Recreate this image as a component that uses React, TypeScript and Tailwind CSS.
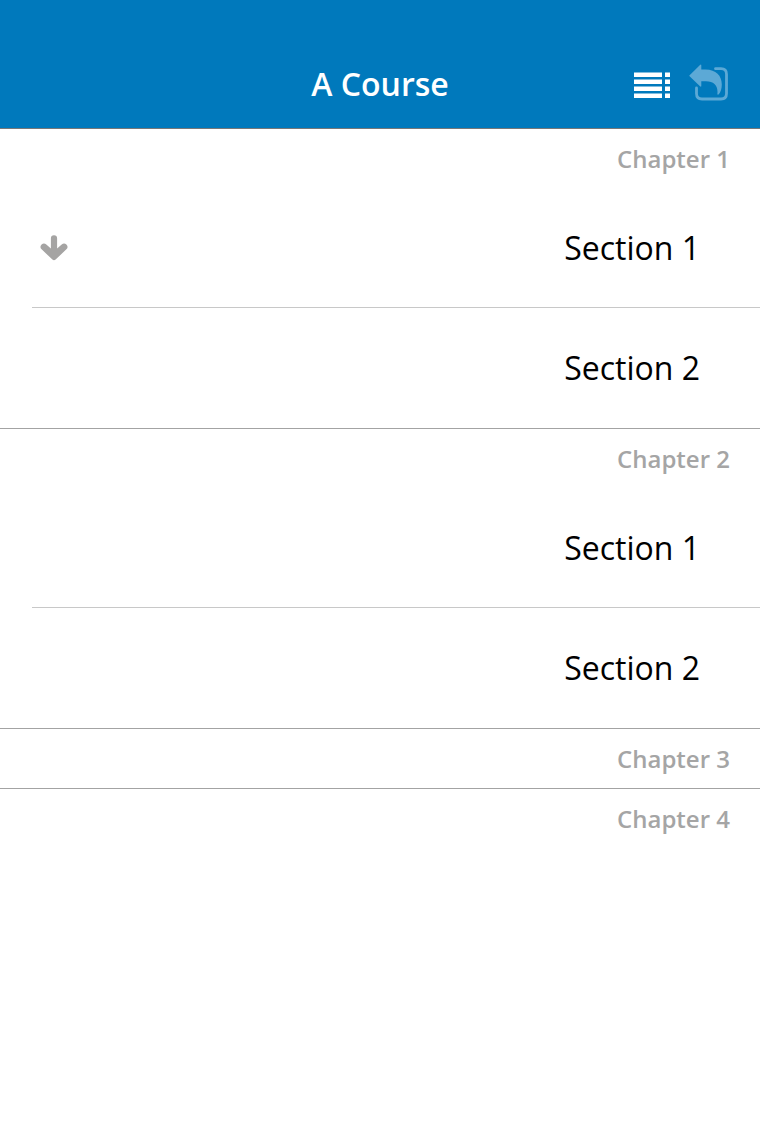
const chapters = [
  { title: "Chapter 1", sections: ["Section 1", "Section 2"], downloadable: "Section 1" },
  { title: "Chapter 2", sections: ["Section 1", "Section 2"] },
  { title: "Chapter 3", sections: [] },
  { title: "Chapter 4", sections: [] },
];

function ListIcon() {
  return (
    <svg viewBox="0 0 36 26" className="h-[26px] w-9" fill="currentColor" aria-hidden="true">
      <path d="M0 .5h28v4.400H0zM31 .5h5v4.400h-5zM0 7.500h28v4.400H0zM31 7.500h5v4.400h-5zM0 14.500h28v4.400H0zM31 14.500h5v4.400h-5zM0 21.500h28v4.400H0zM31 21.500h5v4.400h-5z" />
    </svg>
  );
}

function OpenIcon() {
  return (
    <svg viewBox="0 0 40 38" className="h-[38px] w-10" aria-hidden="true">
      <path
        d="M27.500 4.700H33q5.500 0 5.500 5.500V29.500q0 5.500-5.500 5.500H14q-5.500 0-5.500-5.500V24"
        fill="none"
        stroke="currentColor"
        strokeWidth="2.800"
        strokeLinecap="round"
      />
      <path
        d="M1.600 11.300 12 .9q1.300-1.100 1.300.6V5.500h4.200C28 5.700 33.800 11.500 33.800 20.500c0 4.500-1.200 7.500-3 9.700-.8.800-1.600.4-1.400-.6.800-8.200-3.400-12-11.400-12.300h-4.700v4.400q0 1.700-1.300.6L1.600 12.300q-.6-.5 0-1z"
        fill="currentColor"
      />
    </svg>
  );
}

function ArrowIcon() {
  return (
    <svg viewBox="0 0 28 26" className="h-[26px] w-7" aria-hidden="true">
      <path
        d="M10.900 3.300a3.100 3.100 0 0 1 6.200 0V13.600l4.600-4a3.200 3.200 0 0 1 4.700 4.700L15.600 24.600q-1.600 1.400-3.200 0L1.600 14.300a3.200 3.200 0 0 1 4.700-4.700l4.600 4z"
        fill="currentColor"
      />
    </svg>
  );
}

export default function App() {
  return (
    <div className="min-h-screen bg-white font-['Open_Sans',sans-serif] text-black">
      <header className="grid h-32 grid-cols-[1fr_auto_1fr] items-end bg-[#0079bc] px-8 pb-6 text-white">
        <h1 className="col-start-2 text-[32px] leading-10 font-semibold">A Course</h1>
        <div className="flex h-10 items-start justify-end gap-[18px]">
          <button type="button" aria-label="Course outline" className="mt-2">
            <ListIcon />
          </button>
          <button type="button" aria-label="Open in browser" className="text-[#5ca9d6]">
            <OpenIcon />
          </button>
        </div>
      </header>
      <main>
        {chapters.map((chapter) => (
          <section key={chapter.title} className="border-t border-[#a3a3a3] first:border-[#777777]">
            <h2 className="h-[59px] pt-3 pr-[30px] text-right text-2xl leading-9 font-semibold text-[#a5a5a5]">
              {chapter.title}
            </h2>
            {chapter.sections.length > 0 && (
              <ul className="pl-8">
                {chapter.sections.map((name) => (
                  <li key={name} className="h-[120px] border-b border-[#c8c8c8] last:border-b-0">
                    <div className="flex h-full items-center pr-[60px] pl-2">
                      {chapter.downloadable === name && (
                        <button type="button" aria-label={`Download ${name}`} className="text-[#a5a4a3]">
                          <ArrowIcon />
                        </button>
                      )}
                      <a href="#" className="flex-1 text-right text-[32px] leading-10">
                        {name}
                      </a>
                    </div>
                  </li>
                ))}
              </ul>
            )}
          </section>
        ))}
      </main>
    </div>
  );
}
